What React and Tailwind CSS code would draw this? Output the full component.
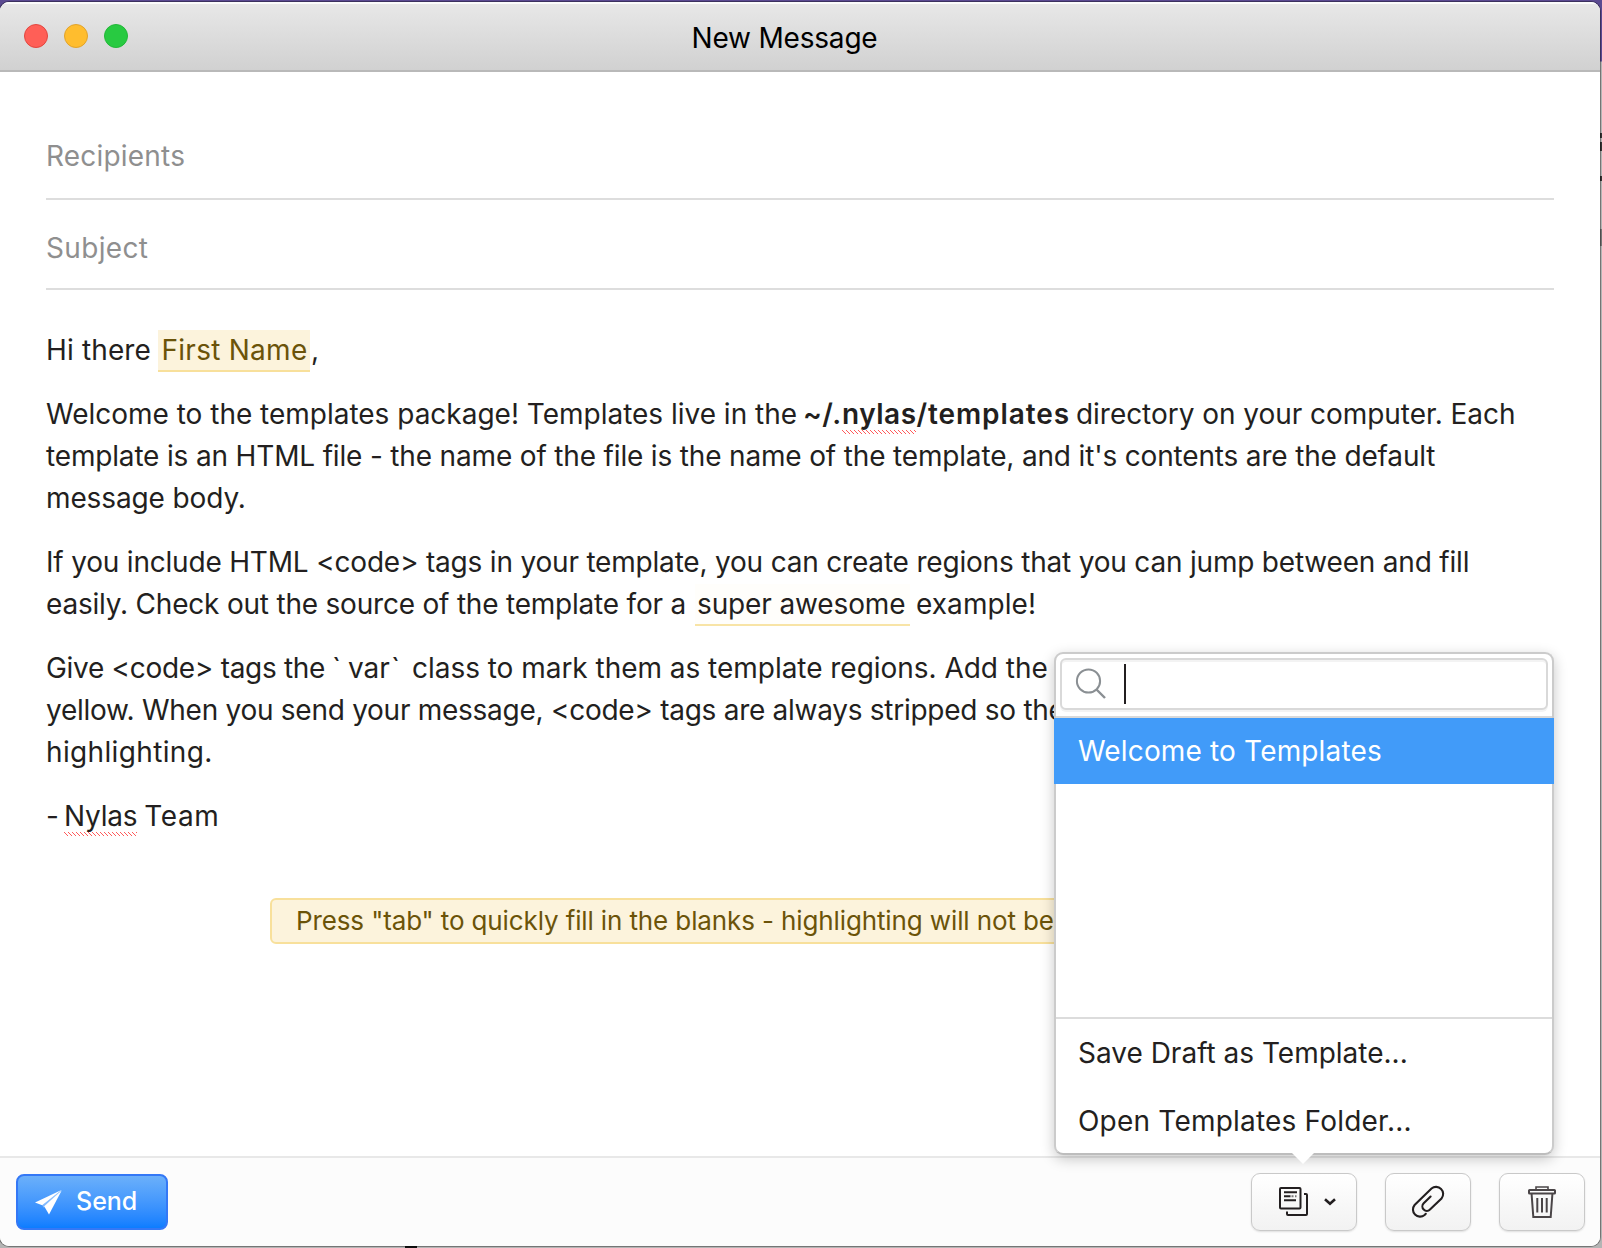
function Squiggle({ id, width }) {
  return (
    <svg className="absolute left-0 top-[37px]" width={width} height="4" aria-hidden="true">
      <defs>
        <pattern id={id} width="4" height="4" patternUnits="userSpaceOnUse">
          <path d="M0 0h1v1h-1z M1 1h1v1h-1z M2 2h1v1h-1z M3 3h1v1h-1z" fill="#ff5a5a" />
        </pattern>
      </defs>
      <rect width={width} height="4" fill={`url(#${id})`} />
    </svg>
  );
}

function SendIcon() {
  return (
    <svg className="ml-[15px] mt-[12px] h-7 w-[30px]" viewBox="0 0 30 28" fill="#fff">
      <path d="M28.5 2 2 14.5 9.2 17.2Z" />
      <path d="M28.8 2.3 11.2 18.2 16 26.6Z" />
      <path d="M28.5 2 9.2 17.2 10.4 19.6 12.6 18.9Z" fill="#fff" fillOpacity="0.35" />
    </svg>
  );
}

function TemplatesIcon() {
  return (
    <svg className="h-[30px] w-[30px]" viewBox="0 0 30 30" fill="none" stroke="#231f20" strokeWidth="2">
      <rect x="1" y="1" width="20.5" height="20.5" rx="1" />
      <path d="M5 5.3H18M5 9.3H11.5M5 13.3H17" />
      <path d="M12.5 9.3H14.5M16 9.3H17.5" strokeOpacity="0.6" />
      <path d="M25 7H27Q28 7 28 8V27Q28 28 27 28H9Q8 28 8 27V24.5" />
    </svg>
  );
}

function ChevronIcon() {
  return (
    <svg className="h-2 w-3" viewBox="0 0 12 8" fill="none" stroke="#231f20" strokeWidth="2.6">
      <path d="M1 1.3 6 5.8 11 1.3" />
    </svg>
  );
}

function PaperclipIcon() {
  return (
    <svg className="h-9 w-9" viewBox="0 0 36 36" fill="none" stroke="#231f20" strokeWidth="2.1" strokeLinecap="round">
      <path d="M15.8 29.8 14.6 31A7.1 7.1 0 0 1 4.6 21L21.5 4.5A7.1 7.1 0 0 1 31.5 14.5L20 25.6A4.4 4.4 0 0 1 13.7 19.3L20.6 12.6" />
    </svg>
  );
}

function TrashIcon() {
  return (
    <svg className="h-[34px] w-[30px]" viewBox="0 0 30 34" fill="none" stroke="#4a4547" strokeWidth="2">
      <path d="M9 4.6V2H21V4.6" strokeWidth="1.6" />
      <rect x="2" y="5" width="26" height="3.6" rx="0.6" />
      <path d="M4.6 9 6.3 32H23.7L25.4 9" />
      <path d="M10.3 13V27.5M15 13V27.5M19.7 13V27.5" />
    </svg>
  );
}

function ToolButton({ className, children }) {
  return (
    <button
      className={
        "flex h-[58px] items-center justify-center rounded-[9px] border border-[#c9c9c9] bg-linear-to-b from-white to-[#f2f2f2] shadow-[0_1px_2px_rgba(0,0,0,0.12)] " +
        className
      }
    >
      {children}
    </button>
  );
}

function TitleBar() {
  return (
    <header className="relative flex h-[70px] shrink-0 items-center justify-center border-b-2 border-[#b9b9b9] bg-linear-to-b from-[#e8e8e8] to-[#d1d1d1] shadow-[inset_0_2px_0_#fbfbfb]">
      <div className="absolute left-6 top-[22px] flex gap-4">
        <i className="size-6 rounded-full border border-[#e2463f] bg-[#ff5f57]" />
        <i className="size-6 rounded-full border border-[#e1a32b] bg-[#ffbd2e]" />
        <i className="size-6 rounded-full border border-[#22b838] bg-[#28ca41]" />
      </div>
      <h1 className="mt-[3px] -ml-[31px] tracking-[-0.19px] text-black">New Message</h1>
    </header>
  );
}

function Message() {
  return (
    <section className="mt-[39px] flex flex-col gap-[22px] whitespace-nowrap leading-[42px]">
      <p className="flex h-[42px]">
        <span className="tracking-[0.14px]">Hi there</span>
        <span className="ml-[7px] mt-[1px] h-[42px] w-[152px] border-b-2 border-[#f8e09b] bg-[#fcf3dc] pl-[3.5px] leading-[40px] tracking-[0.26px] text-[#6b5309]">
          First Name
        </span>
        <span className="ml-px">,</span>
      </p>
      <div>
        <p className="flex">
          <span className="w-[757px] tracking-[-0.01px]">Welcome to the templates package! Templates live in the</span>
          <b className="flex w-[273px] font-semibold tracking-[0.5px]">
            <span className="w-[39px]">~/.</span>
            <span className="relative">
              nylas
              <Squiggle id="spell-path" width={74} />
            </span>
            <span className="tracking-[0.9px]">/templates</span>
          </b>
          <span className="tracking-[-0.04px]">directory on your computer. Each</span>
        </p>
        <p className="tracking-[-0.165px]">
          template is an HTML file - the name of the file is the name of the template, and it's contents are the default
        </p>
        <p className="tracking-[-0.12px]">message body.</p>
      </div>
      <div>
        <p className="tracking-[-0.195px]">
          If you include HTML &lt;code&gt; tags in your template, you can create regions that you can jump between and fill
        </p>
        <p className="flex h-[42px]">
          <span className="w-[649px] tracking-[-0.208px]">easily. Check out the source of the template for a</span>
          <span className="mt-[1px] h-[42px] w-[215px] border-b-2 border-[#f8e4a6] bg-[#fffefb] pl-[2px] leading-[40px] tracking-[-0.13px]">
            super awesome
          </span>
          <span className="ml-[6px] tracking-[0.06px]">example!</span>
        </p>
      </div>
      <div>
        <p className="flex">
          <span className="w-[286px] tracking-[-0.3px]">Give &lt;code&gt; tags the</span>
          <span className="flex w-[80px]">
            <span className="w-[16px]">`</span>
            <span className="w-[43px]">var</span>
            <span>`</span>
          </span>
          <span className="tracking-[-0.03px]">class to mark them as template regions. Add the</span>
        </p>
        <p className="tracking-[-0.27px]">
          yellow. When you send your message, &lt;code&gt; tags are always stripped so the
        </p>
        <p className="tracking-[0.35px]">highlighting.</p>
      </div>
      <p className="flex tracking-[-0.23px]">
        <span className="w-[18px]">-</span>
        <span className="relative">
          Nylas
          <Squiggle id="spell-name" width={73} />
        </span>
        <span className="ml-[7px] tracking-[0.6px]">Team</span>
      </p>
    </section>
  );
}

function TemplatePopover() {
  return (
    <aside className="absolute left-[1054px] top-[652px] flex h-[503px] w-[500px] flex-col rounded-[9px] border-2 border-[#cbcbcb] border-b-[#bdbdbd] bg-white leading-[42px] shadow-[0_4px_14px_rgba(0,0,0,0.22)]">
      <div className="flex h-[64px] shrink-0 border-b-2 border-[#d9d9d9] px-1 pt-1">
        <div className="flex h-[52px] w-full rounded-md border-2 border-[#d9d9d9] bg-white shadow-[inset_0_2px_0_#f3f3f3,0_2px_0_#f3f3f3]">
          <svg className="ml-[13px] mt-[7px] size-8" viewBox="0 0 32 32" fill="none" stroke="#8a8f93" strokeWidth="2">
            <circle cx="13.5" cy="14" r="11.6" />
            <path d="M21.5 22.5 30 31" strokeWidth="2.4" />
          </svg>
          <i className="ml-[17px] mt-1 h-10 w-[2px] bg-[#231f20]" />
        </div>
      </div>
      <div className="-mx-[2px] h-[66px] shrink-0 bg-[#419bf9] pl-6 pt-3 tracking-[0.16px] text-white">
        Welcome to Templates
      </div>
      <div className="mt-auto flex h-[136px] shrink-0 flex-col gap-[26px] border-t-2 border-[#dcdcdc] pl-[22px] pt-[13px]">
        <div className="tracking-[0px]">Save Draft as Template...</div>
        <div className="tracking-[0.2px]">Open Templates Folder...</div>
      </div>
      <svg className="absolute left-[235px] top-[498px] h-4 w-6" viewBox="0 0 24 16" fill="#fff">
        <path d="M0 0H24L12 12Z" />
      </svg>
    </aside>
  );
}

function Toolbar() {
  return (
    <footer className="flex h-[90px] shrink-0 items-start border-t-2 border-[#e8e8e8] bg-[#fcfcfc] pl-4 pr-[15px] pt-[15px]">
      <button className="mt-px flex h-14 w-[152px] rounded-lg border-2 border-[#3478f6] bg-linear-to-b from-[#6bb0fa] to-[#0b7dff] text-white">
        <SendIcon />
        <span className="ml-[13px] text-[25px] font-medium leading-[51px]">Send</span>
      </button>
      <ToolButton className="ml-auto w-[106px] gap-[15px] pl-[7px]">
        <TemplatesIcon />
        <ChevronIcon />
      </ToolButton>
      <ToolButton className="ml-7 w-[86px]">
        <PaperclipIcon />
      </ToolButton>
      <ToolButton className="ml-7 w-[86px]">
        <TrashIcon />
      </ToolButton>
    </footer>
  );
}

export default function App() {
  return (
    <div className="relative h-[1248px] w-[1602px] overflow-hidden bg-[linear-gradient(#5b4a91_0,#5b4a91_61px,#b4b4b4_62px,#b4b4b4_133px,#333_133px,#333_138px,#b4b4b4_138px,#b4b4b4_142px,#333_142px,#333_151px,#b4b4b4_151px,#b4b4b4_176px,#333_176px,#333_181px,#b4b4b4_181px,#b4b4b4_229px,#777_229px,#777_246px,#b4b4b4_246px)] pt-[2px] font-[Inter,sans-serif] text-[28px] leading-[42px] text-[#231f20]">
      <i className="absolute bottom-0 left-[405px] h-[2px] w-3 bg-[#111]" />
      <div className="relative flex h-[1244px] w-[1600px] flex-col overflow-hidden rounded-[9px] bg-white shadow-[0_0_0_1px_rgba(0,0,0,0.35)]">
        <TitleBar />
        <main className="flex grow flex-col pl-[46px]">
          <div className="flex h-32 w-[1508px] items-end border-b-2 border-[#dddddd] pb-[21px] text-[#8f8f8f]">
            <span className="tracking-[0.2px]">Recipients</span>
          </div>
          <div className="flex h-[90px] w-[1508px] items-end border-b-2 border-[#dddddd] pb-[19px] text-[#8f8f8f]">
            <span className="tracking-[0.35px]">Subject</span>
          </div>
          <Message />
          <div className="ml-[224px] mt-[61px] flex h-[46px] w-[1060px] items-center whitespace-nowrap rounded-md border-2 border-[#f8e09b] bg-[#fcf3dc] pl-6 text-[26px] tracking-[-0.12px] text-[#6b5309]">
            Press "tab" to quickly fill in the blanks - highlighting will not be
          </div>
        </main>
        <Toolbar />
      </div>
      <TemplatePopover />
    </div>
  );
}
